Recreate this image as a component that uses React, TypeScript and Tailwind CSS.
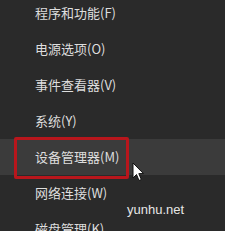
const items = [
  '程序和功能(F)',
  '电源选项(O)',
  '事件查看器(V)',
  '系统(Y)',
  '设备管理器(M)',
  '网络连接(W)',
  '磁盘管理(K)',
];

function Cursor() {
  return (
    <svg width="13" height="20" viewBox="0 0 13 20" className="absolute left-[132px] top-[162px]">
      <path
        d="M1 1 L1 16 L4.5 12.5 L7 18.5 L9.3 17.5 L6.8 11.6 L11.5 11.6 Z"
        fill="#ffffff"
        stroke="#111111"
        strokeWidth="1"
        strokeLinejoin="round"
      />
    </svg>
  );
}

export default function App() {
  return (
    <div
      className="relative h-[231px] w-[225px] overflow-hidden bg-[#2a2a2a]"
      style={{ fontFamily: '"Noto Sans CJK SC", "Noto Sans", sans-serif' }}
    >
      <div className="-mt-[5px] flex flex-col">
        {items.map((label, i) => (
          <div
            key={label}
            className={
              'flex h-[36px] items-center pl-[35px] text-[13px] text-[#dedede] ' +
              (i === 4 ? 'bg-[#3b3b3b]' : '')
            }
          >
            {label}
          </div>
        ))}
      </div>

      {/* red annotation box */}
      <div className="absolute left-[14px] top-[137px] h-[42px] w-[115px] rounded-[2px] border-[3px] border-[#b8161c]" />

      <Cursor />

      <div
        className="absolute left-[127px] top-[200px] text-[13px] text-[#e6e6e6]"
        style={{ fontFamily: '"Liberation Sans", sans-serif' }}
      >
        yunhu.net
      </div>
    </div>
  );
}
